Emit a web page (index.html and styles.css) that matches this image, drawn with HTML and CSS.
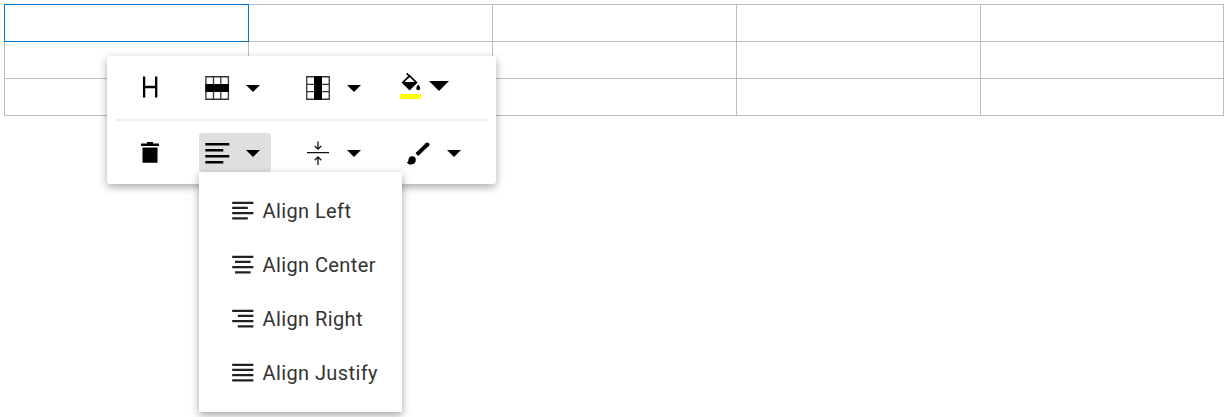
FILE: index.html
```html
<!DOCTYPE html>
<html lang="en">
<head>
<meta charset="utf-8">
<title>Table editor</title>
<link rel="stylesheet" href="styles.css">
</head>
<body>
<div class="table">
  <div class="cell"></div><div class="cell"></div><div class="cell"></div><div class="cell"></div><div class="cell"></div>
  <div class="cell"></div><div class="cell"></div><div class="cell"></div><div class="cell"></div><div class="cell"></div>
  <div class="cell"></div><div class="cell"></div><div class="cell"></div><div class="cell"></div><div class="cell"></div>
  <div class="selection"></div>
</div>
<div class="toolbar">
  <div class="row row-top">
    <div class="tool single"><svg class="icon" viewBox="0 0 24 24"><path d="M6.1 .6v20.9M18.2 .6v20.9M6.1 11h12.1" fill="none" stroke="#000" stroke-width="2.3"/></svg></div>
    <div class="tool">
      <svg class="icon" viewBox="0 0 24 24"><path d="M.9.75h22.5v22.5H.9zM8.5 1v22M15.8 1v22" fill="none" stroke="#333" stroke-width="1.3"/><path d="M.3 8h23.7v8H.3z"/></svg>
      <svg class="caret" viewBox="0 0 14 7"><path d="M0 0h14L7 7z"/></svg>
    </div>
    <div class="tool">
      <svg class="icon" viewBox="0 0 24 24"><path d="M.75.75h22.5v22.5H.75zM1 8.4h22M1 15.6h22" fill="none" stroke="#333" stroke-width="1.3"/><path d="M8 .2h8v23.6H8z"/></svg>
      <svg class="caret" viewBox="0 0 14 7"><path d="M0 0h14L7 7z"/></svg>
    </div>
    <div class="tool fill-tool">
      <div class="fill-color">
        <svg class="bucket" viewBox="0 0 22 20"><path d="M6.6.4l3.2 3.1" fill="none" stroke="#000" stroke-width="1.6"/><path d="M9.6 2.8l6.8 6.6-6.8 6.8-6.8-6.8z" fill="none" stroke="#000" stroke-width="1.7"/><path d="M2.2 8.9h14.8l-7.4 7.7z"/><path d="M18.2 11.6c1.2 1.5 1.9 2.5 1.9 3.7a1.9 1.9 0 0 1-3.8 0c0-1.2.7-2.2 1.9-3.7z"/></svg>
        <div class="swatch"></div>
      </div>
      <svg class="caret-large" viewBox="0 0 20 10"><path d="M0 0h20L10 10z"/></svg>
    </div>
  </div>
  <div class="row row-bottom">
    <div class="tool single"><svg class="icon" viewBox="0 0 24 24"><path d="M3 2.5h6V1h6v1.5h6V5H3zM4.5 6.6h15v15.2h-15z"/></svg></div>
    <div class="tool active">
      <svg class="icon" viewBox="0 0 24 24"><path d="M.3 3.3h24M.3 9.3h18M.3 15.3h24M.3 21.3h18" fill="none" stroke="#000" stroke-width="2.4"/></svg>
      <svg class="caret" viewBox="0 0 14 7"><path d="M0 0h14L7 7z"/></svg>
    </div>
    <div class="tool">
      <svg class="icon" viewBox="0 0 24 24"><path d="M1 11.6h22M12 .4v7.6M8.7 5L12 8.2 15.3 5M12 24v-7.8M8.7 19.2L12 16l3.3 3.2" fill="none" stroke="#111" stroke-width="1.3"/></svg>
      <svg class="caret" viewBox="0 0 14 7"><path d="M0 0h14L7 7z"/></svg>
    </div>
    <div class="tool">
      <svg class="icon" viewBox="0 0 24 24"><path d="M10.8 13.6L21.6 3.2" fill="none" stroke="#000" stroke-width="4"/><circle cx="21.4" cy="3.5" r="2.1"/><path d="M.8 21.2c1.3 0 1.5-1.1 1.6-2.3.2-2.1 1.7-3.6 3.8-3.6a3.6 3.6 0 0 1 3.6 3.7c0 3-2.2 4.5-5.2 4.5-1.7 0-3-.8-3.8-2.3z"/></svg>
      <svg class="caret" viewBox="0 0 14 7"><path d="M0 0h14L7 7z"/></svg>
    </div>
  </div>
</div>
<div class="menu">
  <div class="item"><svg class="menu-icon" viewBox="0 0 22 20"><path d="M.2 1.8h21.2M.2 6.9h15.6M.2 12.1h21.2M.2 17.3h15.6"/></svg><span>Align Left</span></div>
  <div class="item"><svg class="menu-icon" viewBox="0 0 22 20"><path d="M.2 1.8h21.2M3 6.9h15.6M.2 12.1h21.2M3 17.3h15.6"/></svg><span>Align Center</span></div>
  <div class="item"><svg class="menu-icon" viewBox="0 0 22 20"><path d="M.2 1.8h21.2M5.8 6.9h15.6M.2 12.1h21.2M5.8 17.3h15.6"/></svg><span>Align Right</span></div>
  <div class="item"><svg class="menu-icon" viewBox="0 0 22 20"><path d="M.2 1.8h21.2M.2 6.9h21.2M.2 12.1h21.2M.2 17.3h21.2"/></svg><span>Align Justify</span></div>
</div>
</body>
</html>
```
FILE: styles.css
```css
* { box-sizing: border-box; }
body {
  margin: 0;
  padding: 4px;
  height: 417px;
  overflow: hidden;
  background: #fff;
  font-family: Roboto, sans-serif;
}
svg { display: block; flex: none; overflow: visible; }
.table {
  position: relative;
  display: grid;
  grid-template-columns: repeat(4, 243px) 242px;
  grid-auto-rows: 36px;
  gap: 1px;
  padding: 1px;
  width: 1220px;
  background: #bdbdbd;
}
.cell { background: #fff; }
.selection {
  position: absolute;
  left: 0;
  top: 0;
  width: 245px;
  height: 38px;
  border: 1px solid #0078d7;
}
.toolbar {
  position: absolute;
  left: 107px;
  top: 56px;
  width: 389px;
  height: 128px;
  padding: 0 8px 0 9px;
  border-radius: 3px;
  background: #fff;
  box-shadow: 0 3px 8px rgba(0, 0, 0, .34);
}
.row {
  display: grid;
  grid-template-columns: 83px 100.5px 100.5px 88px;
}
.row-top {
  height: 65px;
  padding-top: 12px;
  border-bottom: 2px solid #efefef;
}
.row-bottom { padding-top: 12px; }
.tool {
  display: flex;
  align-items: center;
  gap: 17px;
  width: 72px;
  height: 39px;
  padding-left: 6px;
  border-radius: 3px;
}
.single { padding-left: 22px; }
.active { background: #dfdfdf; }
.icon { width: 24px; height: 24px; }
.caret { width: 14px; height: 7px; margin-top: 2px; }
.fill-tool {
  align-items: flex-start;
  gap: 8px;
  padding: 5px 0 0;
}
.fill-color { width: 21px; flex: none; }
.bucket { width: 22px; height: 20px; }
.swatch {
  height: 5px;
  margin-top: 1px;
  background: #ff0;
}
.caret-large {
  width: 20px;
  height: 10px;
  margin-top: 8px;
}
.menu {
  position: absolute;
  left: 199px;
  top: 172px;
  width: 203px;
  height: 240px;
  padding: 12px 0;
  background: #fff;
  box-shadow: 0 3px 8px rgba(0, 0, 0, .36);
}
.item {
  display: flex;
  align-items: center;
  gap: 8.5px;
  height: 54px;
  padding-left: 33px;
  color: #333;
  font-size: 20px;
  letter-spacing: .4px;
  white-space: nowrap;
}
.menu-icon {
  width: 22px;
  height: 20px;
  fill: none;
  stroke: #212121;
  stroke-width: 2.2;
}
```
